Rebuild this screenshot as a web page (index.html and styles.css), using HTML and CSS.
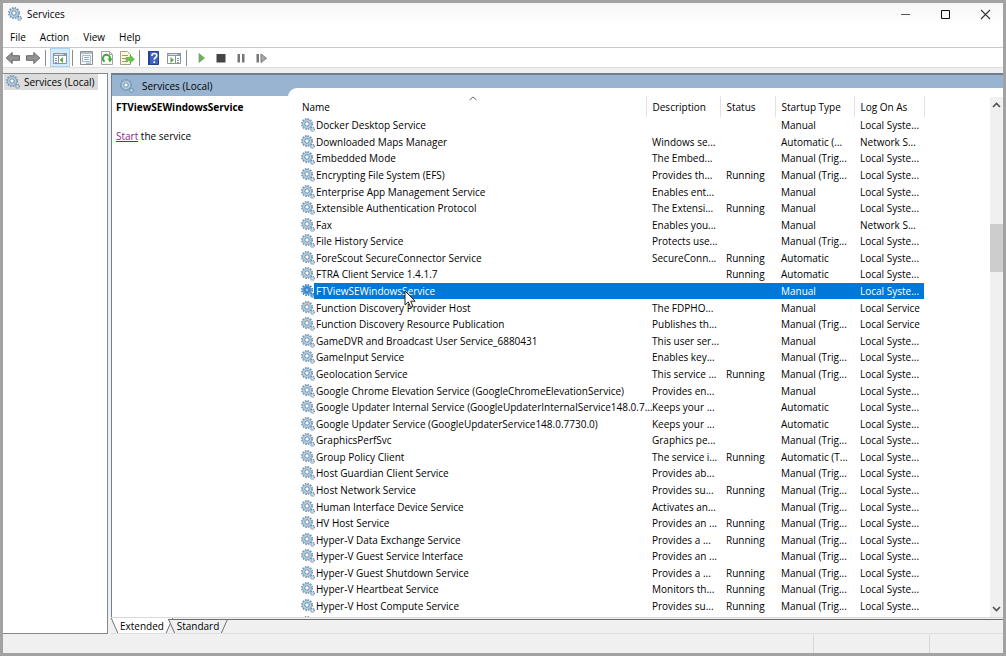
FILE: index.html
```html
<!DOCTYPE html>
<html lang="en">
<head>
    <meta charset="UTF-8">
    <meta name="viewport" content="width=device-width, initial-scale=1.0">
    <title>Services</title>
    <link rel="stylesheet" href="styles.css">
</head>
<body>
    <!-- shared gear icons -->
    <svg class="defs" aria-hidden="true">
        <symbol id="gear" viewBox="0 0 14 14">
            <circle cx="6" cy="6" r="5.2" fill="none" stroke="#6f8fac" stroke-width="1.6" stroke-dasharray="1.5 1.22"/>
            <circle cx="6" cy="6" r="3.5" fill="#f4f9fc" stroke="#b4cfe2" stroke-width="2.4"/>
            <circle cx="6" cy="6" r="4.6" fill="none" stroke="#7b9bb6" stroke-width=".7"/>
            <circle cx="6" cy="6" r="2.2" fill="#fff" stroke="#6488aa" stroke-width="1"/>
            <circle cx="11.4" cy="11.2" r="2" fill="none" stroke="#6f8fac" stroke-width="1.3" stroke-dasharray="1 .8"/>
            <circle cx="11.4" cy="11.2" r="1.2" fill="#e5f0f7" stroke="#8eaec8" stroke-width=".9"/>
        </symbol>
        <symbol id="gear-selected" viewBox="0 0 14 14">
            <circle cx="6" cy="6" r="5.2" fill="none" stroke="#3178b8" stroke-width="1.6" stroke-dasharray="1.5 1.22"/>
            <circle cx="6" cy="6" r="3.5" fill="#7cb8ea" stroke="#4b9ade" stroke-width="2.4"/>
            <circle cx="6" cy="6" r="2.2" fill="#8cc4f2" stroke="#1c62a5" stroke-width="1"/>
            <circle cx="11.4" cy="11.2" r="2" fill="none" stroke="#3178b8" stroke-width="1.3" stroke-dasharray="1 .8"/>
            <circle cx="11.4" cy="11.2" r="1.2" fill="#7cb8ea" stroke="#3c88cb" stroke-width=".9"/>
        </symbol>
    </svg>

    <div class="window">
        <header class="titlebar">
            <svg class="gear"><use href="#gear"/></svg>
            <span class="title">Services</span>
            <button type="button" class="caption" aria-label="Minimize"><svg width="11" height="11" viewBox="0 0 11 11"><path d="M1 5.500h9" stroke="#555"/></svg></button>
            <button type="button" class="caption" aria-label="Maximize"><svg width="11" height="11" viewBox="0 0 11 11"><path d="M1.500 1.500h8v8h-8z" fill="none" stroke="#111"/></svg></button>
            <button type="button" class="caption" aria-label="Close"><svg width="11" height="11" viewBox="0 0 11 11"><path d="M1 1l9 9M10 1l-9 9" stroke="#333" stroke-width="1.1"/></svg></button>
        </header>

        <nav class="menu">
            <button type="button">File</button>
            <button type="button">Action</button>
            <button type="button">View</button>
            <button type="button">Help</button>
        </nav>

        <div class="toolbar">
            <button type="button" aria-label="Back"><svg viewBox="0 0 16 16"><path d="M1.200 8l6-5.500v3.200h7.300v4.600H7.200v3.200z" fill="#929292" stroke="#686868"/></svg></button>
            <button type="button" aria-label="Forward"><svg viewBox="0 0 16 16"><path d="M14.800 8l-6-5.500v3.200H1.500v4.600h7.300v3.200z" fill="#929292" stroke="#686868"/></svg></button>
            <span class="sep"></span>
            <button type="button" class="on" aria-label="Show/Hide Console Tree"><svg viewBox="0 0 16 16"><path d="M1.500 3.500h13v10h-13z" fill="#fff" stroke="#8b939b"/><path d="M1 3h14v3H1z" fill="#8b98a4"/><path d="M2.500 4.500h9" stroke="#dbe3ea"/><path d="M6.500 6v8" stroke="#8b939b"/><path d="M3 8.500h2M3 10.500h2M3 12.500h2" stroke="#7795bb"/><path d="M7.500 10l3.500-3v6z" fill="#52b043"/></svg></button>
            <span class="sep"></span>
            <button type="button" aria-label="Properties"><svg viewBox="0 0 16 16"><path d="M1.500 1.500h12v13h-12z" fill="#f5f8fa" stroke="#8c8f92"/><path d="M2 2h11v2H2z" fill="#b5bec7"/><path d="M3.500 5.500h8v6h-8z" fill="#fff" stroke="#a8bac9"/><path d="M5 7.500h5M5 9.500h5" stroke="#86abc8"/><path d="M7 13.200h5" stroke="#8ba9bd"/></svg></button>
            <button type="button" aria-label="Refresh"><svg viewBox="0 0 16 16"><path d="M2.500 1.500h8l3 3v10h-11z" fill="#fbfbfb" stroke="#a5a5a5"/><path d="M10.500 1.500v3h3" fill="none" stroke="#a5a5a5"/><path d="M5.600 11.500A3.600 3.600 0 1 1 11 8.800" fill="none" stroke="#3eaa35" stroke-width="1.800"/><path d="M8.500 8.500h5L11 12.500z" fill="#3eaa35"/></svg></button>
            <button type="button" aria-label="Export List"><svg viewBox="0 0 16 16"><path d="M1.500 1.500h7l3 3v10h-10z" fill="#fdf7dc" stroke="#aaa083"/><path d="M3 5.500h6M3 8.500h4M3 11.500h6" stroke="#9d9a84"/><path d="M7 7.500h4V5l4.500 4.200L11 13.200v-2.700H7z" fill="#65c545" stroke="#43a42e" stroke-width=".5"/></svg></button>
            <span class="sep"></span>
            <button type="button" aria-label="Help"><svg viewBox="0 0 16 16"><path d="M2.500 1.500h10v13h-10z" fill="#3e62c5" stroke="#24408b"/><path d="M2 1h2v14H2z" fill="#254594"/><path d="M6 6V4.800Q6.200 3.500 8.200 3.500q2.600 0 2.600 2 0 1.400-1.500 2.200Q8.300 8.300 8.300 9.800M8.300 11.200v1.800" fill="none" stroke="#fff" stroke-width="1.600"/></svg></button>
            <button type="button" aria-label="Show/Hide Action Pane"><svg viewBox="0 0 16 16"><path d="M1.500 3.500h13v10h-13z" fill="#fff" stroke="#8b939b"/><path d="M1 3h14v3H1z" fill="#8b98a4"/><path d="M2.500 4.500h9" stroke="#dbe3ea"/><path d="M9.500 6v8" stroke="#8b939b"/><path d="M11 8.500h2M11 10.500h2M11 12.500h2" stroke="#8b939b"/><path d="M4.500 7L8 10l-3.500 3z" fill="#52b043"/></svg></button>
            <span class="sep"></span>
            <button type="button" aria-label="Start Service"><svg viewBox="0 0 16 16"><path d="M6 3.500L11.500 8 6 12.500z" fill="#60ba4c" stroke="#8a9b87" stroke-width=".8"/></svg></button>
            <button type="button" aria-label="Stop Service"><svg viewBox="0 0 16 16"><path d="M3.500 4h9v8.500h-9z" fill="#454545"/></svg></button>
            <button type="button" aria-label="Pause Service"><svg viewBox="0 0 16 16"><path d="M4.500 4H7v8.500H4.500zM9 4h2.500v8.500H9z" fill="#777"/></svg></button>
            <button type="button" aria-label="Restart Service"><svg viewBox="0 0 16 16"><path d="M3.500 4H6v8.500H3.500z" fill="#777"/><path d="M8 4v8.500l5.500-4.200z" fill="#aaa" stroke="#777"/></svg></button>
        </div>

        <div class="panes">
            <aside class="tree">
                <a class="node" href="#"><svg class="gear"><use href="#gear"/></svg>Services (Local)</a>
            </aside>

            <section class="content">
                <div class="view">
                    <div class="details">
                        <h2 class="band"><svg class="gear"><use href="#gear"/></svg>Services (Local)</h2>
                        <h3>FTViewSEWindowsService</h3>
                        <p><a href="#">Start</a> the service</p>
                    </div>
                    <div class="list">
                        <div class="rows">
                            <table>
                                <colgroup>
                                    <col class="col-name"><col class="col-desc"><col class="col-status"><col class="col-startup"><col class="col-logon">
                                </colgroup>
                                <thead>
                                    <tr>
                                        <th>Name<svg class="sort" width="9" height="5" viewBox="0 0 9 5"><path d="M1 4l3.500-3L8 4" fill="none" stroke="#666"/></svg></th>
                                        <th>Description</th>
                                        <th>Status</th>
                                        <th>Startup Type</th>
                                        <th>Log On As</th>
                                    </tr>
                                </thead>
                                <tbody id="services"></tbody>
                            </table>
                        </div>
                        <div class="scrollbar">
                            <svg width="9" height="6" viewBox="0 0 9 6"><path d="M1 5l3.500-3.500L8 5" fill="none" stroke="#505050" stroke-width="1.600"/></svg>
                            <div class="track"><div class="thumb"></div></div>
                            <svg width="9" height="6" viewBox="0 0 9 6"><path d="M1 1l3.500 3.500L8 1" fill="none" stroke="#505050" stroke-width="1.600"/></svg>
                        </div>
                    </div>
                </div>
                <div class="tabs">
                    <button type="button" class="tab active">Extended</button>
                    <button type="button" class="tab">Standard</button>
                    <span class="rest"></span>
                </div>
            </section>
        </div>

        <footer class="status"><span></span><span></span><span></span></footer>

        <svg class="cursor" width="13" height="19" viewBox="0 0 13 19"><path d="M1 1v14l3.300-3 2.200 5.200 2.400-1L6.700 11.200h4.500z" fill="#fff" stroke="#222"/></svg>
    </div>

    <script>
        const services = [
            ['Docker Desktop Service', '', '', 'Manual', 'Local Syste...'],
            ['Downloaded Maps Manager', 'Windows se...', '', 'Automatic (...', 'Network S...'],
            ['Embedded Mode', 'The Embed...', '', 'Manual (Trig...', 'Local Syste...'],
            ['Encrypting File System (EFS)', 'Provides th...', 'Running', 'Manual (Trig...', 'Local Syste...'],
            ['Enterprise App Management Service', 'Enables ent...', '', 'Manual', 'Local Syste...'],
            ['Extensible Authentication Protocol', 'The Extensi...', 'Running', 'Manual', 'Local Syste...'],
            ['Fax', 'Enables you...', '', 'Manual', 'Network S...'],
            ['File History Service', 'Protects use...', '', 'Manual (Trig...', 'Local Syste...'],
            ['ForeScout SecureConnector Service', 'SecureConn...', 'Running', 'Automatic', 'Local Syste...'],
            ['FTRA Client Service 1.4.1.7', '', 'Running', 'Automatic', 'Local Syste...'],
            ['FTViewSEWindowsService', '', '', 'Manual', 'Local Syste...'],
            ['Function Discovery Provider Host', 'The FDPHO...', '', 'Manual', 'Local Service'],
            ['Function Discovery Resource Publication', 'Publishes th...', '', 'Manual (Trig...', 'Local Service'],
            ['GameDVR and Broadcast User Service_6880431', 'This user ser...', '', 'Manual', 'Local Syste...'],
            ['GameInput Service', 'Enables key...', '', 'Manual (Trig...', 'Local Syste...'],
            ['Geolocation Service', 'This service ...', 'Running', 'Manual (Trig...', 'Local Syste...'],
            ['Google Chrome Elevation Service (GoogleChromeElevationService)', 'Provides en...', '', 'Manual', 'Local Syste...'],
            ['Google Updater Internal Service (GoogleUpdaterInternalService148.0.7...', 'Keeps your ...', '', 'Automatic', 'Local Syste...'],
            ['Google Updater Service (GoogleUpdaterService148.0.7730.0)', 'Keeps your ...', '', 'Automatic', 'Local Syste...'],
            ['GraphicsPerfSvc', 'Graphics pe...', '', 'Manual (Trig...', 'Local Syste...'],
            ['Group Policy Client', 'The service i...', 'Running', 'Automatic (T...', 'Local Syste...'],
            ['Host Guardian Client Service', 'Provides ab...', '', 'Manual (Trig...', 'Local Syste...'],
            ['Host Network Service', 'Provides su...', 'Running', 'Manual (Trig...', 'Local Syste...'],
            ['Human Interface Device Service', 'Activates an...', '', 'Manual (Trig...', 'Local Syste...'],
            ['HV Host Service', 'Provides an ...', 'Running', 'Manual (Trig...', 'Local Syste...'],
            ['Hyper-V Data Exchange Service', 'Provides a ...', 'Running', 'Manual (Trig...', 'Local Syste...'],
            ['Hyper-V Guest Service Interface', 'Provides an ...', '', 'Manual (Trig...', 'Local Syste...'],
            ['Hyper-V Guest Shutdown Service', 'Provides a ...', 'Running', 'Manual (Trig...', 'Local Syste...'],
            ['Hyper-V Heartbeat Service', 'Monitors th...', 'Running', 'Manual (Trig...', 'Local Syste...'],
            ['Hyper-V Host Compute Service', 'Provides su...', 'Running', 'Manual (Trig...', 'Local Syste...'],
            ['', '', '', '', '']
        ];
        const selected = 'FTViewSEWindowsService';

        document.getElementById('services').innerHTML = services.map(([name, ...rest]) => `
            <tr${name === selected ? ' class="selected"' : ''}>
                <td><div class="name"><svg class="gear"><use href="#${name === selected ? 'gear-selected' : 'gear'}"/></svg><span>${name}</span></div></td>
                ${rest.map(text => `<td>${text}</td>`).join('')}
            </tr>`).join('');
    </script>
</body>
</html>
```
FILE: styles.css
```css
* {
    box-sizing: border-box;
}
body {
    margin: 0;
    font-family: "Open Sans", "Noto Sans", sans-serif;
    font-size: 10px;
    line-height: 14px;
    color: #000;
}
button {
    padding: 0;
    border: none;
    background: none;
    font: inherit;
    color: inherit;
}
svg {
    display: block;
}
.defs {
    position: absolute;
    width: 0;
    height: 0;
}
.gear {
    width: 14px;
    height: 14px;
    flex: none;
}
.window {
    position: relative;
    display: flex;
    flex-direction: column;
    height: 100vh;
    border: 3px solid #a2a2a2;
    background: #fff;
}

/* title bar and menu */
.titlebar {
    display: flex;
    align-items: center;
    gap: 5px;
    height: 22px;
    padding-left: 5px;
    background: linear-gradient(#f6f6f6, #fff);
}
.title {
    flex: 1;
}
.caption {
    display: flex;
    align-items: center;
    justify-content: center;
    width: 35px;
    height: 21px;
}
.menu {
    display: flex;
    align-items: center;
    gap: 14px;
    height: 22px;
    padding: 2px 7px 0;
}

/* toolbar */
.toolbar {
    display: flex;
    align-items: center;
    height: 21px;
    border-top: 1px solid #c9c9c9;
    border-bottom: 1px solid #dedede;
}
.toolbar button {
    display: flex;
    align-items: center;
    justify-content: center;
    width: 20px;
    height: 19px;
}
.toolbar button.on {
    background: #d3eafb;
    border: 1px solid #a8d5f5;
}
.toolbar svg {
    width: 16px;
    height: 16px;
    flex: none;
}
.sep {
    width: 1px;
    height: 16px;
    margin: 0 4px 0 2px;
    background: #8d8d8d;
}

/* panes */
.panes {
    display: flex;
    flex: 1;
    gap: 3px;
    min-height: 0;
    padding-top: 5px;
    background: #f0f0f0;
}
.tree {
    width: 105px;
    border: solid #85888c;
    border-width: 1px 1px 1px 0;
    background: #fff;
}
.node {
    display: flex;
    align-items: center;
    gap: 4px;
    width: 94px;
    height: 16px;
    margin-left: 1px;
    padding-left: 2px;
    background: #dcdcdc;
    color: inherit;
    text-decoration: none;
    white-space: nowrap;
}
.content {
    display: flex;
    flex: 1;
    flex-direction: column;
    min-width: 0;
}
.view {
    display: flex;
    flex: 1;
    min-height: 0;
    border: solid #6f7f90;
    border-width: 2px 0 0 1px;
    background: #99b4d1;
}
.details {
    width: 176px;
    background: #fff;
}
.band {
    display: flex;
    align-items: center;
    gap: 8px;
    height: 21px;
    margin: 0;
    padding-left: 8px;
    background: #99b4d1;
    font-size: 10px;
    font-weight: normal;
}
h3 {
    margin: 4px 4px 15px;
    font-size: 10px;
}
p {
    margin: 0 4px;
}
p a {
    color: #881f88;
}

/* service list */
.list {
    display: flex;
    flex: 1;
    min-width: 0;
    margin-top: 13px;
    padding: 8px 0 0 12px;
    border-top-left-radius: 9px;
    background: #fff;
}
.rows {
    flex: 1;
    overflow: hidden;
}
table {
    width: 624px;
    height: 535px;
    border-collapse: collapse;
    table-layout: fixed;
}
.col-name {
    width: 346px;
}
.col-desc {
    width: 74px;
}
.col-status {
    width: 55px;
}
.col-startup {
    width: 79px;
}
.col-logon {
    width: 70px;
}
th,
td {
    padding: 0 0 0 6px;
    text-align: left;
    white-space: nowrap;
}
th {
    position: relative;
    height: 21px;
    border-right: 1px solid #e2e2e2;
    font-weight: normal;
}
th:first-child {
    padding-left: 2px;
}
td:first-child {
    padding: 0;
}
.sort {
    position: absolute;
    top: 0;
    left: 50%;
    transform: translateX(-50%);
}
.name {
    display: flex;
    align-items: center;
    gap: 1px;
    padding-left: 1px;
}
.selected {
    color: #fff;
    background: linear-gradient(90deg, #fff 14px, #0078d7 14px);
}
.scrollbar {
    display: flex;
    flex-direction: column;
    align-items: center;
    width: 13px;
    margin-top: 1px;
    padding: 5px 0;
    background: #f0f0f0;
}
.track {
    flex: 1;
    width: 100%;
    padding-top: 116px;
}
.thumb {
    height: 48px;
    background: #cdcdcd;
}

/* view tabs */
.tabs {
    display: flex;
    height: 17px;
    padding-left: 3px;
    border-top: 1px solid #d9d9d9;
    border-bottom: 1px solid #dedede;
}
.tab {
    position: relative;
    isolation: isolate;
    width: 54px;
    margin-right: 1px;
}
.tab.active {
    width: 56px;
}
.tab::before,
.tab::after {
    content: "";
    position: absolute;
    z-index: -1;
    top: 1px;
    bottom: 0;
    width: 60%;
    border-top: 1px solid #6e6e6e;
    background: #f0f0f0;
}
.tab::before {
    left: 0;
    border-left: 1px solid #6e6e6e;
    transform: skewX(24deg);
}
.tab::after {
    right: 0;
    border-right: 1px solid #6e6e6e;
    transform: skewX(-24deg);
}
.tab.active::before,
.tab.active::after {
    top: 0;
    border-top: none;
    background: #fff;
}
.rest {
    flex: 1;
    margin-top: 1px;
    border-top: 1px solid #6e6e6e;
}

/* status bar */
.status {
    display: flex;
    height: 19px;
    padding-top: 1px;
    background: #f0f0f0;
}
.status span {
    width: 116px;
    border-right: 1px solid #d7d7d7;
}
.status span:first-child {
    flex: 1;
}
.status span:last-child {
    width: 73px;
    border: none;
}

.cursor {
    position: absolute;
    top: 287px;
    left: 401px;
}
```
